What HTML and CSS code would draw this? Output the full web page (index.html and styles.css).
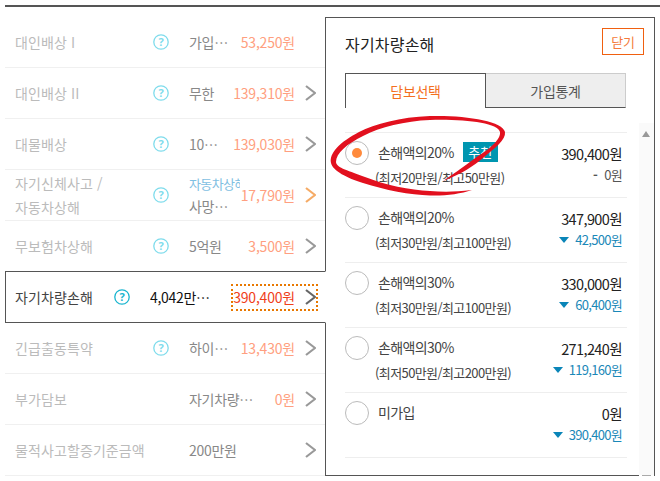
FILE: index.html
```html
<!DOCTYPE html>
<html lang="ko">
<head>
<meta charset="utf-8">
<title>자기차량손해</title>
<link rel="stylesheet" href="styles.css">
</head>
<body>
<div class="page">
  <div class="top-rule"></div>
  <div class="layout">
    <ul class="coverage">
      <li class="row">
        <span class="label">대인배상 I</span>
        <svg class="help" viewBox="0 0 16 16"><circle cx="8" cy="8" r="7.2"/><text x="8" y="12">?</text></svg>
        <span class="value">가입⋯</span>
        <span class="cost"><span class="price">53,250원</span><span class="chev-slot"></span></span>
      </li>
      <li class="row">
        <span class="label">대인배상 II</span>
        <svg class="help" viewBox="0 0 16 16"><circle cx="8" cy="8" r="7.2"/><text x="8" y="12">?</text></svg>
        <span class="value">무한</span>
        <span class="cost"><span class="price">139,310원</span><svg class="chev" viewBox="0 0 11 16"><path d="M1 1l9 7-9 7"/></svg></span>
      </li>
      <li class="row">
        <span class="label">대물배상</span>
        <svg class="help" viewBox="0 0 16 16"><circle cx="8" cy="8" r="7.2"/><text x="8" y="12">?</text></svg>
        <span class="value">10⋯</span>
        <span class="cost"><span class="price">139,030원</span><svg class="chev" viewBox="0 0 11 16"><path d="M1 1l9 7-9 7"/></svg></span>
      </li>
      <li class="row row-tall">
        <span class="label">자기신체사고 /<br>자동차상해</span>
        <svg class="help" viewBox="0 0 16 16"><circle cx="8" cy="8" r="7.2"/><text x="8" y="12">?</text></svg>
        <span class="value value-stack"><span class="value-note">자동차상해</span><span>사망⋯</span></span>
        <span class="cost"><span class="price">17,790원</span><svg class="chev chev-warm" viewBox="0 0 11 16"><path d="M1 1l9 7-9 7"/></svg></span>
      </li>
      <li class="row">
        <span class="label">무보험차상해</span>
        <svg class="help" viewBox="0 0 16 16"><circle cx="8" cy="8" r="7.2"/><text x="8" y="12">?</text></svg>
        <span class="value">5억원</span>
        <span class="cost"><span class="price">3,500원</span><svg class="chev" viewBox="0 0 11 16"><path d="M1 1l9 7-9 7"/></svg></span>
      </li>
      <li class="row row-active">
        <span class="label">자기차량손해</span>
        <svg class="help" viewBox="0 0 16 16"><circle cx="8" cy="8" r="7.2"/><text x="8" y="12">?</text></svg>
        <span class="value">4,042만⋯</span>
        <span class="cost"><span class="price">390,400원</span><svg class="chev" viewBox="0 0 11 16"><path d="M1 1l9 7-9 7"/></svg></span>
      </li>
      <li class="row">
        <span class="label">긴급출동특약</span>
        <svg class="help" viewBox="0 0 16 16"><circle cx="8" cy="8" r="7.2"/><text x="8" y="12">?</text></svg>
        <span class="value">하이⋯</span>
        <span class="cost"><span class="price">13,430원</span><svg class="chev" viewBox="0 0 11 16"><path d="M1 1l9 7-9 7"/></svg></span>
      </li>
      <li class="row">
        <span class="label label-wide">부가담보</span>
        <span class="value">자기차량⋯</span>
        <span class="cost"><span class="price">0원</span><svg class="chev" viewBox="0 0 11 16"><path d="M1 1l9 7-9 7"/></svg></span>
      </li>
      <li class="row">
        <span class="label label-wide">물적사고할증기준금액</span>
        <span class="value">200만원</span>
        <span class="cost"><svg class="chev" viewBox="0 0 11 16"><path d="M1 1l9 7-9 7"/></svg></span>
      </li>
    </ul>

    <section class="panel">
      <header class="panel-head">
        <h2 class="panel-title">자기차량손해</h2>
        <button class="close">닫기</button>
      </header>
      <div class="tabs">
        <div class="tab tab-on">담보선택</div>
        <div class="tab">가입통계</div>
      </div>
      <div class="options">
        <div class="option">
          <span class="radio radio-on"></span>
          <div class="opt-main">
            <div class="opt-name">손해액의20%<span class="badge">추천</span></div>
            <div class="opt-sub">(최저20만원/최고50만원)</div>
          </div>
          <div class="opt-price">
            <div class="amount">390,400원</div>
            <div class="diff diff-none"><b class="dash">-</b>0원</div>
          </div>
        </div>
        <div class="option">
          <span class="radio"></span>
          <div class="opt-main">
            <div class="opt-name">손해액의20%</div>
            <div class="opt-sub">(최저30만원/최고100만원)</div>
          </div>
          <div class="opt-price">
            <div class="amount">347,900원</div>
            <div class="diff"><i class="down"></i>42,500원</div>
          </div>
        </div>
        <div class="option">
          <span class="radio"></span>
          <div class="opt-main">
            <div class="opt-name">손해액의30%</div>
            <div class="opt-sub">(최저30만원/최고100만원)</div>
          </div>
          <div class="opt-price">
            <div class="amount">330,000원</div>
            <div class="diff"><i class="down"></i>60,400원</div>
          </div>
        </div>
        <div class="option">
          <span class="radio"></span>
          <div class="opt-main">
            <div class="opt-name">손해액의30%</div>
            <div class="opt-sub">(최저50만원/최고200만원)</div>
          </div>
          <div class="opt-price">
            <div class="amount">271,240원</div>
            <div class="diff"><i class="down"></i>119,160원</div>
          </div>
        </div>
        <div class="option">
          <span class="radio"></span>
          <div class="opt-main">
            <div class="opt-name">미가입</div>
          </div>
          <div class="opt-price">
            <div class="amount">0원</div>
            <div class="diff"><i class="down"></i>390,400원</div>
          </div>
        </div>
      </div>
      <div class="scroll"><i class="scroll-up"></i><i class="scroll-thumb"></i></div>
      <svg class="scribble" viewBox="0 0 190 90"><path d="M118 66C135 60 150 50 158 43C170 33 181 25 180 17C178 6 140 0 105 1C75 2 50 9 34 17C15 27 4 38 6 48C8 56 22 63 38 68C60 75 85 80 105 80.5C120 81 135 79 147 75C130 77 118 77 105 76C85 75 60 70 40 62C25 56 11 53 11 47C11 38 22 29 38 21C55 12 80 6 105 5C140 4 173 8 175 17C176 24 165 34 153 41C145 47 130 58 118 66Z"/></svg>
    </section>
  </div>
</div>
</body>
</html>
```
FILE: styles.css
```css
* { box-sizing: border-box; }
html, body { margin: 0; padding: 0; background: #fff; }
body {
  font-family: "Noto Sans CJK KR", "Noto Sans", sans-serif;
  font-size: 14px;
  letter-spacing: -0.3px;
  overflow: hidden;
}
.page { width: 660px; height: 481px; padding-top: 5px; }
.top-rule { height: 2px; margin-left: 5px; background: #555; }
.layout { display: flex; margin: 10px 0 0 5px; align-items: flex-start; }

.coverage { list-style: none; margin: 0; padding: 0; width: 321px; flex: none; }
.row {
  display: flex;
  align-items: center;
  height: 51px;
  width: 320px;
  padding: 0 10px;
  border-bottom: 1px solid #f0f0f0;
  line-height: 24px;
}
.label { width: 138px; flex: none; color: #bbb; letter-spacing: 0.1px; }
.label-wide { width: 174px; }
.help { width: 16px; height: 16px; flex: none; margin-right: 20px; }
.help circle { fill: #fff; stroke: #7fdcec; stroke-width: 1.3; }
.help text { fill: #7fdcec; font: bold 11px "Noto Sans", sans-serif; text-anchor: middle; }
.value { flex: 1; min-width: 0; color: #888; white-space: nowrap; overflow: hidden; }
.value-stack { display: flex; flex-direction: column; flex: none; width: 51px; line-height: 22px; margin-right: auto; }
.value-note { color: #7fc0e2; font-size: 13px; letter-spacing: -0.6px; overflow: hidden; }
.cost { display: flex; align-items: center; flex: none; gap: 10px; }
.price { color: #ff9f80; letter-spacing: -0.2px; }
.chev-slot { width: 10px; }
.chev { width: 11px; height: 16px; fill: none; stroke: #999; stroke-width: 2.2; margin-right: -1px; }
.chev-warm { stroke: #f5ab66; }

.row-active {
  position: relative;
  z-index: 2;
  width: 321px;
  height: 52px;
  margin-top: -1px;
  padding: 0 9px;
  background: #fff;
  border: 1px solid #555;
  border-right-color: #fff;
}
.row-active .label { width: 99px; color: #444; }
.row-active .help circle { stroke: #1ab5cf; }
.row-active .help text { fill: #1ab5cf; }
.row-active .value { color: #111; }
.row-active .cost { outline: 2px dotted #e87800; outline-offset: 0; height: 23px; padding: 0 1px 0 0; }
.row-active .price { color: #f0401a; }
.row-active .chev { stroke: #666; }

.panel {
  position: relative;
  flex: none;
  width: 330px;
  height: 459px;
  margin-left: -1px;
  border: 1px solid #555;
  padding: 0 28px 0 19px;
  color: #333;
}
.panel-head { display: flex; justify-content: space-between; align-items: flex-start; height: 55px; padding-top: 10px; margin-right: -18px; }
.panel-title { margin: 4px 0 0; font-size: 16px; line-height: 24px; font-weight: 400; color: #222; letter-spacing: 0.2px; }
.close {
  width: 42px;
  height: 27px;
  padding: 0;
  border: 1px solid #f06010;
  background: #fff;
  color: #f47a3a;
  font: inherit;
  font-size: 13px;
  letter-spacing: inherit;
}
.tabs { display: flex; width: 281px; height: 35px; }
.tab {
  flex: 1;
  display: flex;
  align-items: center;
  justify-content: center;
  background: #eee;
  border: 1px solid #ccc;
  border-bottom-color: #555;
  border-left: 0;
  color: #555;
}
.tab-on {
  background: #fff;
  border: 1px solid #555;
  border-bottom: 0;
  color: #f4701f;
}
.options { margin-top: 24px; width: 282px; border-top: 1px solid #eee; }
.option {
  display: flex;
  height: 65px;
  border-bottom: 1px solid #eee;
  padding-right: 5px;
}
.radio {
  flex: none;
  width: 24px;
  height: 24px;
  margin-top: 8px;
  border: 1px solid #bbb;
  border-radius: 50%;
  display: flex;
  align-items: center;
  justify-content: center;
}
.radio-on::before { content: ""; width: 10px; height: 10px; border-radius: 50%; background: #ff8a3c; }
.opt-main { flex: 1; margin-left: 6px; padding-top: 7px; line-height: 24px; color: #444; }
.opt-name { margin-left: 3px; display: flex; align-items: center; height: 24px; letter-spacing: -0.6px; }
.opt-sub { margin-top: 2px; font-size: 13px; letter-spacing: -0.6px; white-space: nowrap; }
.badge {
  width: 35px;
  height: 20px;
  margin-left: 9px;
  background: #0096b0;
  color: #fff;
  font-size: 13px;
  line-height: 20px;
  text-align: center;
  letter-spacing: 0;
}
.opt-price { flex: none; text-align: right; padding-top: 10px; line-height: 21px; }
.amount { font-size: 14.5px; letter-spacing: -0.6px; color: #222; }
.diff { font-size: 13px; letter-spacing: -0.7px; color: #1a88b8; display: flex; justify-content: flex-end; align-items: center; }
.diff-none { color: #555; }
.dash { margin-right: 7px; }
.down {
  width: 0;
  height: 0;
  margin-right: 6px;
  border-left: 5px solid transparent;
  border-right: 5px solid transparent;
  border-top: 6px solid #0a85b8;
}
.scroll { position: absolute; right: 0; top: 105px; bottom: -1px; width: 15px; background: #fafafa; border-bottom: 1px solid #fff; }
.scroll-up {
  position: absolute;
  left: 3px;
  top: 8px;
  border-left: 4.5px solid transparent;
  border-right: 4.5px solid transparent;
  border-bottom: 6px solid #999;
}
.scroll-thumb { position: absolute; left: 3px; bottom: -1px; width: 9px; height: 1px; background: #aaa; }
.scribble {
  position: absolute;
  left: -1px;
  top: 97px;
  width: 190px;
  height: 90px;
  overflow: visible;
  pointer-events: none;
}
.scribble path { fill: #e2101e; }
```
